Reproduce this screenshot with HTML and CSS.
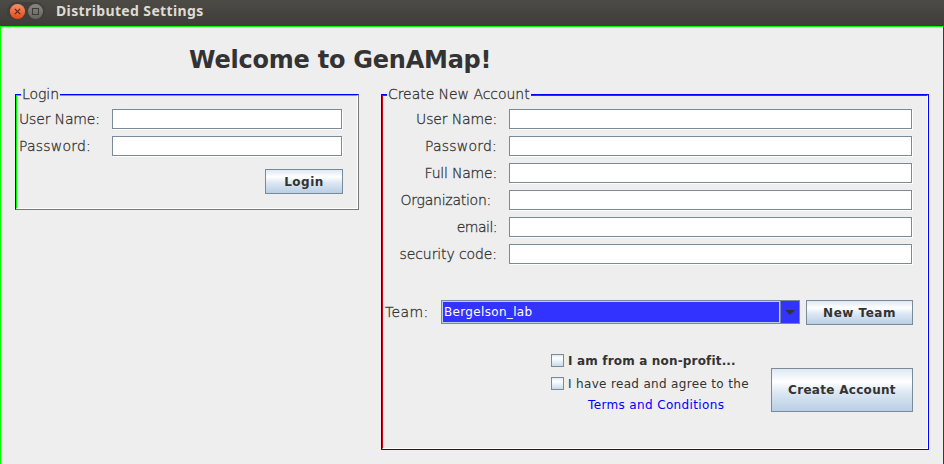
FILE: index.html
```html
<!DOCTYPE html>
<html lang="en">
<head>
<meta charset="utf-8">
<title>Distributed Settings</title>
<link rel="stylesheet" href="styles.css">
</head>
<body>
<header class="titlebar">
  <svg class="controls" width="38" height="20" viewBox="0 0 38 20">
    <defs>
      <linearGradient id="close" x1="0" y1="0" x2="0" y2="1"><stop offset="0" stop-color="#f7906b"/><stop offset="1" stop-color="#df4a16"/></linearGradient>
      <linearGradient id="max" x1="0" y1="0" x2="0" y2="1"><stop offset="0" stop-color="#8a8880"/><stop offset="1" stop-color="#66645d"/></linearGradient>
    </defs>
    <rect width="38" height="19" rx="9.5" fill="#413f3b"/>
    <circle cx="10.5" cy="9.5" r="7.6" fill="url(#close)"/>
    <path d="M7.8 6.8l5.4 5.4M13.2 6.8l-5.4 5.4" stroke="#5a2a16" stroke-width="1.2"/>
    <circle cx="28.5" cy="9.5" r="7.5" fill="url(#max)"/>
    <rect x="25.5" y="6.5" width="6" height="6" fill="none" stroke="#3c3b37"/>
  </svg>
  <span class="window-title">Distributed Settings</span>
</header>
<main class="content">
  <h1 class="welcome">Welcome to GenAMap!</h1>
  <div class="columns">
    <section class="panel login">
      <h2 class="legend">Login</h2>
      <div class="panel-body">
        <div class="row"><label class="label user" for="lu">User Name:</label><input class="field" id="lu"></div>
        <div class="row"><label class="label password" for="lp">Password:</label><input class="field" id="lp" type="password"></div>
        <button class="button login-button">Login</button>
      </div>
    </section>
    <section class="panel account">
      <h2 class="legend">Create New Account</h2>
      <div class="panel-body">
        <div class="row"><label class="label user" for="au">User Name:</label><input class="field" id="au"></div>
        <div class="row"><label class="label password" for="ap">Password:</label><input class="field" id="ap" type="password"></div>
        <div class="row"><label class="label full-name" for="af">Full Name:</label><input class="field" id="af"></div>
        <div class="row"><label class="label organization" for="ao">Organization:</label><input class="field" id="ao"></div>
        <div class="row"><label class="label email" for="ae">email:</label><input class="field" id="ae"></div>
        <div class="row"><label class="label security" for="as">security code:</label><input class="field" id="as"></div>
        <div class="team-row">
          <span class="label team-label">Team:</span>
          <div class="combo"><span class="combo-value">Bergelson_lab</span><span class="combo-arrow"><svg width="10" height="5" viewBox="0 0 10 5"><path d="M0 0h10L5 5z" fill="#333"/></svg></span></div>
          <button class="button team-button">New Team</button>
        </div>
        <div class="submit-row">
          <div class="agreements">
            <div class="check"><span class="box"></span><span class="check-text bold">I am from a non-profit...</span></div>
            <div class="check"><span class="box"></span><span class="check-text">I have read and agree to the</span></div>
            <a class="terms">Terms and Conditions</a>
          </div>
          <button class="button create-button">Create Account</button>
        </div>
      </div>
    </section>
  </div>
</main>
</body>
</html>
```
FILE: styles.css
```css
* { box-sizing: border-box; }
body {
  margin: 0;
  width: 944px;
  height: 464px;
  overflow: hidden;
  display: flex;
  flex-direction: column;
  background: #eee;
  color: #333;
  font-family: "DejaVu Sans", sans-serif;
}
.titlebar {
  height: 26px;
  flex: none;
  display: flex;
  align-items: flex-start;
  padding: 2px 0 0 7px;
  background: linear-gradient(#4d4b46, #3d3c38);
}
.window-title {
  margin: -1px 0 0 11px;
  color: #dfdbd2;
  font: bold 14px/19px "Noto Sans", sans-serif;
  letter-spacing: 0.37px;
  white-space: nowrap;
}
.content {
  flex: 1;
  border-top: 1px solid #0f0;
  border-left: 1px solid #0f0;
  border-right: 1px solid #3c3b37;
}
.welcome {
  margin: 18px 0 0 188px;
  height: 49px;
  font-size: 24px;
  line-height: 30px;
  letter-spacing: -0.23px;
  white-space: nowrap;
}
.columns {
  display: flex;
  align-items: flex-start;
  gap: 22px;
  padding-left: 14px;
}
.panel { position: relative; border: 1px solid #00f; }
.login { width: 344px; height: 116px; border-right-color: #777; border-bottom-color: #777; }
.account { width: 548px; height: 356px; }
.panel-body {
  height: 100%;
  display: flex;
  flex-direction: column;
  border: 1px solid #fff;
  padding-top: 13px;
}
.login .panel-body { border-top-color: #0f0; border-left-color: #0f0; padding-left: 2px; }
.account .panel-body { border-top-color: #d00018; border-left-color: #d00018; padding-left: 2px; }
.legend {
  position: absolute;
  top: -9px;
  left: 5px;
  margin: 0;
  padding: 0 1px;
  background: #eee;
  font-size: 14px;
  font-weight: 200;
  line-height: 17px;
  letter-spacing: -0.05px;
  -webkit-text-stroke: 0.3px #333;
  white-space: nowrap;
}
.row { display: flex; height: 21px; margin-bottom: 6px; }
.label {
  font-size: 14px;
  font-weight: 200;
  line-height: 20px;
  -webkit-text-stroke: 0.3px #333;
  white-space: nowrap;
}
.user { letter-spacing: -0.15px; }
.password { letter-spacing: 0.2px; }
.full-name { letter-spacing: -0.2px; }
.organization { letter-spacing: -0.25px; }
.email { letter-spacing: -0.5px; }
.security { letter-spacing: -0.1px; }
.login .label { width: 93px; }
.account .row .label { width: 112px; margin-right: 12px; text-align: right; }
.account .row .organization { padding-right: 6px; }
.field {
  width: 230px;
  height: 20px;
  padding: 0 3px;
  border: 1px solid #7a8a99;
  border-radius: 0;
  outline: 0;
  background: #fff;
  box-shadow: 1px 1px #fff;
  font: 12px "DejaVu Sans", sans-serif;
}
.account .field { width: 403px; }
.button {
  flex: none;
  padding: 0;
  border: 1px solid #7a8a99;
  border-radius: 0;
  background: linear-gradient(#dde8f3, #fff 30%, #dde8f3 55%, #b8cfe5);
  color: #333;
  font: bold 12px "DejaVu Sans", sans-serif;
  letter-spacing: 0.5px;
  white-space: nowrap;
}
.login-button { width: 78px; height: 25px; margin: 6px 0 0 246px; }
.team-row { display: flex; margin-top: 29px; height: 25px; }
.team-label { width: 56px; line-height: 24px; letter-spacing: 0.35px; }
.combo {
  display: flex;
  width: 359px;
  height: 24px;
  border: 1px solid #7a8a99;
  background: #33f;
}
.combo-value {
  width: 338px;
  padding-left: 1px;
  border: 1px solid #b8cfe5;
  color: #fff;
  font-size: 12px;
  line-height: 20px;
  letter-spacing: 0.33px;
}
.combo-arrow {
  flex: 1;
  display: flex;
  align-items: center;
  justify-content: center;
  border-left: 1px solid #7a8a99;
}
.team-button { width: 107px; height: 25px; margin-left: 6px; }
.submit-row { display: flex; margin: 26px 0 0 166px; }
.agreements { width: 220px; }
.check { display: flex; align-items: center; height: 19px; margin-bottom: 4px; }
.box {
  width: 13px;
  height: 13px;
  margin-right: 4px;
  border: 1px solid #7a8a99;
  background: linear-gradient(#dde8f3, #fff 30%, #c8d9ea);
}
.check-text { padding-top: 1px; font-size: 12px; line-height: 19px; letter-spacing: 0.33px; white-space: nowrap; }
.bold { font-weight: bold; letter-spacing: 0.17px; }
.terms {
  display: block;
  margin: 0 0 0 37px;
  color: #00f;
  font-size: 12px;
  line-height: 17px;
  letter-spacing: 0.36px;
  white-space: nowrap;
}
.create-button { width: 142px; height: 44px; margin-top: 17px; letter-spacing: 0.3px; }
```
